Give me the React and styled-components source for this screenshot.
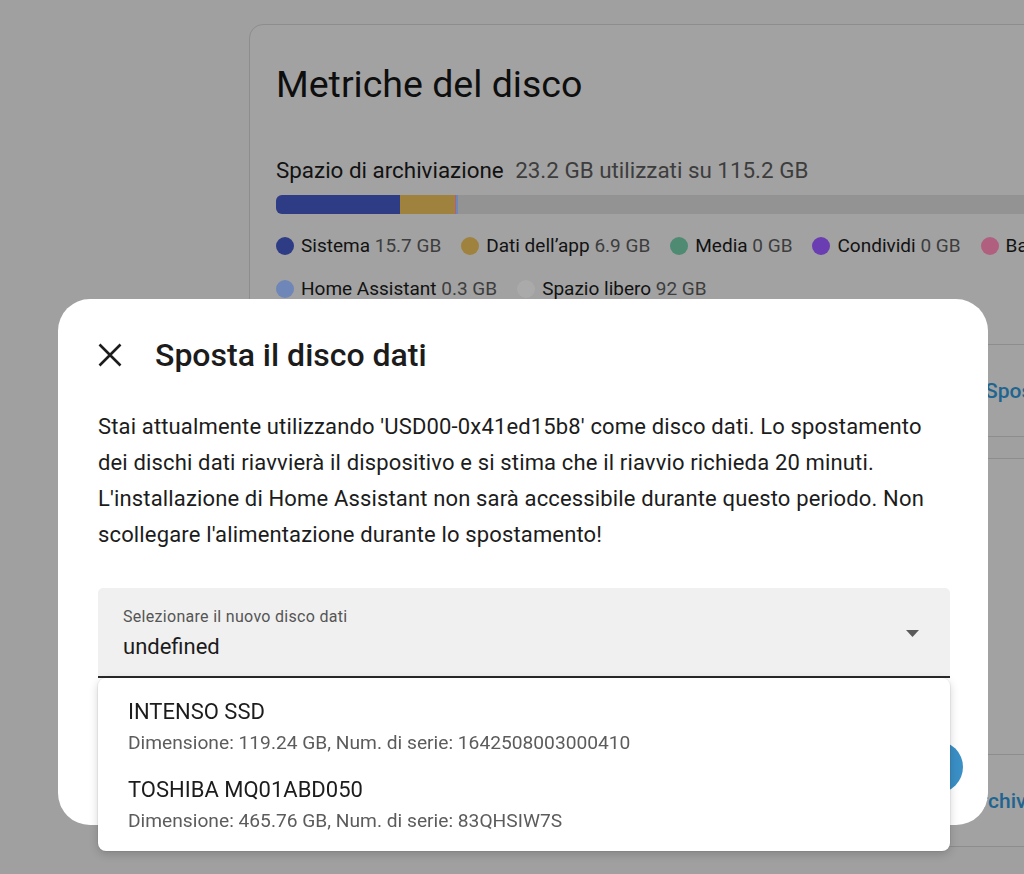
import React from "react";
import styled, { createGlobalStyle } from "styled-components";

const legend = [
  { label: "Sistema", value: "15.7 GB", color: "#2d3c84" },
  { label: "Dati dell’app", value: "6.9 GB", color: "#a0823f" },
  { label: "Media", value: "0 GB", color: "#4f8a73" },
  { label: "Condividi", value: "0 GB", color: "#6b3db2" },
  { label: "Backup", value: "0 GB", color: "#b0607e" },
  { label: "Home Assistant", value: "0.3 GB", color: "#6f86b8" },
  { label: "Spazio libero", value: "92 GB", color: "#aaaaaa" },
];

const segments = [
  { color: "#2d3c84", width: 124 },
  { color: "#a0823f", width: 55 },
  { color: "#b0607e", width: 1 },
  { color: "#6f86b8", width: 2 },
];

const disks = [
  { name: "INTENSO SSD", info: "Dimensione: 119.24 GB, Num. di serie: 1642508003000410" },
  { name: "TOSHIBA MQ01ABD050", info: "Dimensione: 465.76 GB, Num. di serie: 83QHSIW7S" },
];

export default function App() {
  return (
    <>
      <GlobalStyle />
      <Page>
        <Card>
          <CardBody>
            <CardTitle>Metriche del disco</CardTitle>
            <StorageLine>
              Spazio di archiviazione <Muted>23.2 GB utilizzati su 115.2 GB</Muted>
            </StorageLine>
            <Bar>
              {segments.map((s, i) => (
                <Segment key={i} $color={s.color} style={{ width: s.width }} />
              ))}
            </Bar>
            <Legend>
              {legend.map((l) => (
                <LegendItem key={l.label}>
                  <Dot $color={l.color} />
                  {l.label} <LegendValue>{l.value}</LegendValue>
                </LegendItem>
              ))}
            </Legend>
          </CardBody>
          <CardActions $offset={735}>
            <LinkButton>Sposta il disco dati</LinkButton>
          </CardActions>
        </Card>
        <Card>
          <CardBody $height={295}>
            <CardTitle>Archiviazione</CardTitle>
          </CardBody>
          <CardActions $offset={676}>
            <LinkButton>Apri archiviazione</LinkButton>
          </CardActions>
        </Card>
      </Page>

      <Dialog>
        <DialogHeader>
          <CloseButton aria-label="Chiudi">
            <svg width="24" height="24" viewBox="0 0 24 24">
              <path d="M1.5 1.5 22.5 22.5M22.5 1.5 1.5 22.5" stroke="#1c1c1c" strokeWidth="2.6" fill="none" />
            </svg>
          </CloseButton>
          <DialogTitle>Sposta il disco dati</DialogTitle>
        </DialogHeader>
        <DialogText>
          Stai attualmente utilizzando 'USD00-0x41ed15b8' come disco dati. Lo spostamento dei dischi dati
          riavvierà il dispositivo e si stima che il riavvio richieda 20 minuti. L'installazione di Home
          Assistant non sarà accessibile durante questo periodo. Non scollegare l'alimentazione durante lo
          spostamento!
        </DialogText>
        <Select>
          <SelectLabel>Selezionare il nuovo disco dati</SelectLabel>
          <SelectValue>undefined</SelectValue>
          <Arrow width="13" height="7" viewBox="0 0 13 7">
            <path d="M0 0h13L6.5 7z" fill="#5a5a5a" />
          </Arrow>
          <Menu>
            {disks.map((d) => (
              <MenuItem key={d.name}>
                <ItemName>{d.name}</ItemName>
                <ItemInfo>{d.info}</ItemInfo>
              </MenuItem>
            ))}
          </Menu>
        </Select>
        <DialogFooter>
          <PrimaryButton>Sposta</PrimaryButton>
        </DialogFooter>
      </Dialog>
    </>
  );
}

const GlobalStyle = createGlobalStyle`
  html, body {
    margin: 0;
    padding: 0;
  }
  body {
    background: #a0a0a0;
    font-family: Roboto, "Noto Sans", sans-serif;
    width: 1024px;
    height: 874px;
    overflow: hidden;
  }
`;

const Page = styled.div`
  display: flex;
  flex-direction: column;
  gap: 21px;
  padding: 24px 0 0 249px;
  width: 1024px;
  box-sizing: border-box;
  overflow: hidden;
`;

const Card = styled.section`
  flex: none;
  width: 920px;
  background: #a2a2a2;
  border: 1px solid #8d8d8d;
  border-radius: 14px;
  box-sizing: border-box;
`;

const CardBody = styled.div`
  padding: 37px 26px 43px;
  height: ${(p) => (p.$height ? `${p.$height}px` : "auto")};
  box-sizing: border-box;
`;

const CardTitle = styled.h1`
  margin: 0;
  font-size: 37.5px;
  line-height: 44px;
  font-weight: 400;
  color: #0e0e0e;
`;

const StorageLine = styled.div`
  margin-top: 49px;
  font-size: 22.4px;
  line-height: 30px;
  color: #121212;
`;

const Muted = styled.span`
  color: #3d3d3d;
  margin-left: 6px;
`;

const Bar = styled.div`
  display: flex;
  height: 19px;
  margin-top: 10px;
  background: #939393;
  border-radius: 6px 0 0 6px;
  overflow: hidden;
`;

const Segment = styled.div`
  background: ${(p) => p.$color};
  flex: none;
`;

const Legend = styled.div`
  display: flex;
  flex-wrap: wrap;
  column-gap: 20px;
  row-gap: 19px;
  margin-top: 20px;
`;

const LegendItem = styled.div`
  display: flex;
  align-items: center;
  font-size: 19px;
  line-height: 24px;
  color: #121212;
  white-space: pre;
`;

const LegendValue = styled.span`
  color: #3d3d3d;
`;

const Dot = styled.span`
  width: 18px;
  height: 18px;
  border-radius: 50%;
  background: ${(p) => p.$color};
  margin-right: 7px;
`;

const CardActions = styled.div`
  display: flex;
  align-items: center;
  height: 92px;
  border-top: 1px solid #8d8d8d;
  padding-left: ${(p) => p.$offset}px;
  box-sizing: border-box;
`;

const LinkButton = styled.span`
  font-size: 21px;
  font-weight: 500;
  color: #1f6590;
  white-space: nowrap;
`;

const Dialog = styled.div`
  position: fixed;
  left: 58px;
  top: 299px;
  width: 930px;
  height: 526px;
  box-sizing: border-box;
  padding: 37px 38px 32px 40px;
  background: #ffffff;
  border-radius: 32px;
  display: flex;
  flex-direction: column;
`;

const DialogHeader = styled.div`
  display: flex;
  align-items: center;
  height: 38px;
`;

const CloseButton = styled.div`
  display: flex;
  width: 24px;
  height: 24px;
  margin-right: 33px;
`;

const DialogTitle = styled.h2`
  margin: 0;
  font-size: 32px;
  line-height: 38px;
  font-weight: 500;
  color: #1c1c1c;
`;

const DialogText = styled.p`
  margin: 35px 0 0;
  font-size: 22px;
  line-height: 36px;
  letter-spacing: 0.15px;
  color: #1c1c1c;
`;

const Select = styled.div`
  position: relative;
  margin-top: 35px;
  height: 90px;
  box-sizing: border-box;
  padding: 18px 25px 0;
  background: #f0f0f0;
  border-radius: 5px 5px 0 0;
  border-bottom: 2px solid #2a2a2a;
`;

const SelectLabel = styled.div`
  font-size: 16px;
  line-height: 22px;
  letter-spacing: 0.3px;
  color: #555555;
`;

const SelectValue = styled.div`
  margin-top: 4px;
  font-size: 22px;
  line-height: 30px;
  color: #1c1c1c;
`;

const Arrow = styled.svg`
  position: absolute;
  right: 31px;
  top: 42px;
`;

const Menu = styled.div`
  position: absolute;
  top: calc(100% + 2px);
  left: 0;
  right: 0;
  z-index: 2;
  padding: 9px 0 8px;
  background: #ffffff;
  border-radius: 8px;
  box-shadow: 0 3px 10px rgba(0, 0, 0, 0.18), 0 0 0 1px rgba(0, 0, 0, 0.05);
`;

const MenuItem = styled.div`
  display: flex;
  flex-direction: column;
  justify-content: center;
  gap: 5px;
  height: 78px;
  padding: 0 30px;
`;

const ItemName = styled.div`
  font-size: 22px;
  line-height: 27px;
  color: #1c1c1c;
`;

const ItemInfo = styled.div`
  font-size: 19.2px;
  line-height: 25px;
  color: #5c5c5c;
`;

const DialogFooter = styled.div`
  display: flex;
  justify-content: flex-end;
  margin-top: auto;
  margin-right: -13px;
`;

const PrimaryButton = styled.div`
  height: 52px;
  padding: 0 32px;
  display: flex;
  align-items: center;
  border-radius: 26px;
  background: #3a8fc5;
  color: #ffffff;
  font-size: 18px;
  font-weight: 500;
`;
